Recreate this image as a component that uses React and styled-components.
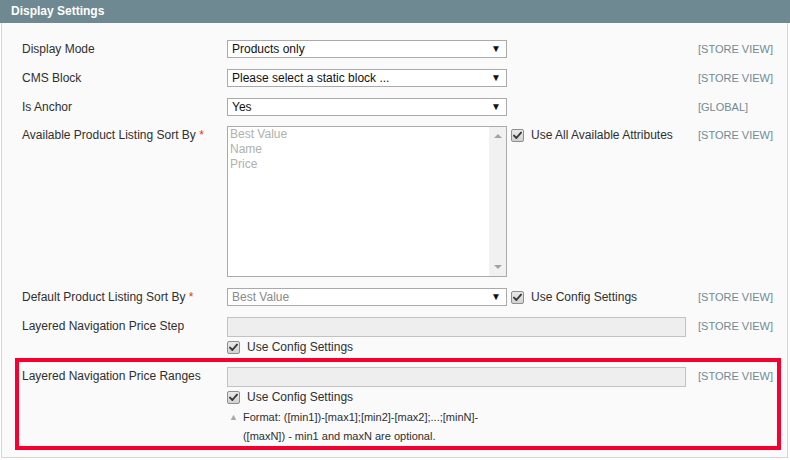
import React from "react";
import styled, { createGlobalStyle } from "styled-components";

const GlobalStyle = createGlobalStyle`
  html, body {
    margin: 0;
    padding: 0;
    background: #fff;
  }
  body {
    font-family: "Liberation Sans", Arial, sans-serif;
    font-size: 12px;
    color: #2f2f2f;
  }
`;

let Check = () => (
  <CheckBox>
    <svg width="9" height="9" viewBox="0 0 9 9">
      <path d="M1 4.6 L3.4 7 L8 1.6" fill="none" stroke="#3a3a3a" strokeWidth="1.9" strokeLinecap="round" strokeLinejoin="round" />
    </svg>
  </CheckBox>
);

let Dropdown = ({ value, muted }) => (
  <SelectBox>
    <SelectText muted={muted}>{value}</SelectText>
    <Arrow>▼</Arrow>
  </SelectBox>
);

let App = () => {
  return (
    <Wrapper>
      <GlobalStyle />
      <Header>Display Settings</Header>
      <Body>
        <Row>
          <Label>Display Mode</Label>
          <Value><Dropdown value="Products only" /></Value>
          <Scope>[STORE VIEW]</Scope>
        </Row>
        <Row>
          <Label>CMS Block</Label>
          <Value><Dropdown value="Please select a static block ..." /></Value>
          <Scope>[STORE VIEW]</Scope>
        </Row>
        <Row gap="10px">
          <Label>Is Anchor</Label>
          <Value><Dropdown value="Yes" /></Value>
          <Scope>[GLOBAL]</Scope>
        </Row>
        <Row>
          <Label>Available Product Listing Sort By <Req>*</Req></Label>
          <Value>
            <Inline>
              <MultiSelect>
                <Options>
                  <span>Best Value</span>
                  <span>Name</span>
                  <span>Price</span>
                </Options>
                <Scrollbar>
                  <ScrollArrow />
                  <ScrollArrow down />
                </Scrollbar>
              </MultiSelect>
              <CheckLine side>
                <Check />
                <span>Use All Available Attributes</span>
              </CheckLine>
            </Inline>
          </Value>
          <Scope>[STORE VIEW]</Scope>
        </Row>
        <Row>
          <Label>Default Product Listing Sort By <Req>*</Req></Label>
          <Value>
            <Inline>
              <Dropdown value="Best Value" muted />
              <CheckLine side>
                <Check />
                <span>Use Config Settings</span>
              </CheckLine>
            </Inline>
          </Value>
          <Scope>[STORE VIEW]</Scope>
        </Row>
        <Row gap="4px">
          <Label>Layered Navigation Price Step</Label>
          <Value>
            <TextInput />
            <CheckLine>
              <Check />
              <span>Use Config Settings</span>
            </CheckLine>
          </Value>
          <Scope>[STORE VIEW]</Scope>
        </Row>
        <Highlight>
          <Row gap="0">
            <Label>Layered Navigation Price Ranges</Label>
            <Value>
              <TextInput />
              <CheckLine>
                <Check />
                <span>Use Config Settings</span>
              </CheckLine>
              <Note>
                <NoteArrow>▲</NoteArrow>
                <span>
                  Format: ([min1])-[max1];[min2]-[max2];...;[minN]-<br />
                  ([maxN]) - min1 and maxN are optional.
                </span>
              </Note>
            </Value>
            <Scope>[STORE VIEW]</Scope>
          </Row>
        </Highlight>
      </Body>
    </Wrapper>
  );
};

const Wrapper = styled.div`
  width: 790px;
  height: 460px;
  background: #fff;
`;

const Header = styled.div`
  height: 23px;
  line-height: 22px;
  padding-left: 11px;
  background: #6f8992;
  color: #fff;
  font-weight: bold;
  font-size: 12px;
`;

const Body = styled.div`
  margin: 0 2px 0 1px;
  border: 1px solid #d6d6d6;
  border-top: none;
  background: #fafafa;
  padding: 17px 6px 7px 20px;
`;

const Row = styled.div`
  display: grid;
  grid-template-columns: 205px 459px 1fr;
  align-items: start;
  margin-bottom: ${(p) => p.gap || "11px"};
`;

const Label = styled.div`
  line-height: 18px;
  font-size: 12px;
  color: #2f2f2f;
`;

const Req = styled.span`
  color: #eb340a;
`;

const Value = styled.div`
  display: flex;
  flex-direction: column;
`;

const Scope = styled.div`
  padding-left: 12px;
  line-height: 18px;
  font-size: 11px;
  color: #718a96;
  white-space: nowrap;
`;

const Inline = styled.div`
  display: flex;
  align-items: flex-start;
`;

const SelectBox = styled.div`
  box-sizing: border-box;
  width: 280px;
  height: 18px;
  border: 1px solid #aaa;
  background: #fff;
  display: flex;
  align-items: center;
  justify-content: space-between;
  padding: 0 5px 0 4px;
`;

const SelectText = styled.span`
  font-size: 12px;
  color: ${(p) => (p.muted ? "#8a8a8a" : "#111")};
`;

const Arrow = styled.span`
  font-size: 10px;
  color: #111;
  line-height: 1;
`;

const MultiSelect = styled.div`
  box-sizing: border-box;
  width: 280px;
  height: 151px;
  border: 1px solid #aaa;
  background: #fff;
  display: flex;
`;

const Options = styled.div`
  flex: 1;
  display: flex;
  flex-direction: column;
  padding: 0 2px;
  font-size: 12px;
  line-height: 15px;
  color: #b0b0b0;
`;

const Scrollbar = styled.div`
  width: 17px;
  background: #f1f1f1;
  display: flex;
  flex-direction: column;
  justify-content: space-between;
  align-items: center;
  padding: 7px 0;
`;

const ScrollArrow = styled.span`
  width: 0;
  height: 0;
  border-left: 4px solid transparent;
  border-right: 4px solid transparent;
  ${(p) =>
    p.down
      ? "border-top: 4px solid #a3a3a3;"
      : "border-bottom: 4px solid #a3a3a3;"}
`;

const CheckLine = styled.label`
  display: flex;
  align-items: center;
  gap: 7px;
  font-size: 12px;
  color: #2f2f2f;
  line-height: 13px;
  margin: ${(p) => (p.side ? "3px 0 0 4px" : "4px 0 0 0")};
  white-space: nowrap;
`;

const CheckBox = styled.span`
  box-sizing: border-box;
  width: 13px;
  height: 13px;
  border: 1px solid #8f8f8f;
  border-radius: 2px;
  background: linear-gradient(#e9e9e9, #d2d2d2);
  display: flex;
  align-items: center;
  justify-content: center;
  flex-shrink: 0;
`;

const TextInput = styled.div`
  box-sizing: border-box;
  width: 459px;
  height: 20px;
  border: 1px solid #c2c2c2;
  background: #eee;
`;

const Note = styled.div`
  display: flex;
  gap: 5px;
  margin-top: 4px;
  font-size: 11px;
  line-height: 19px;
  color: #2f2f2f;
  padding-left: 2px;
`;

const NoteArrow = styled.span`
  font-size: 9px;
  color: #a8a8a8;
`;

const Highlight = styled.div`
  margin-left: -7px;
  border: 4px solid #f5002f;
  padding: 5px 0 0 3px;
`;

export default App;
